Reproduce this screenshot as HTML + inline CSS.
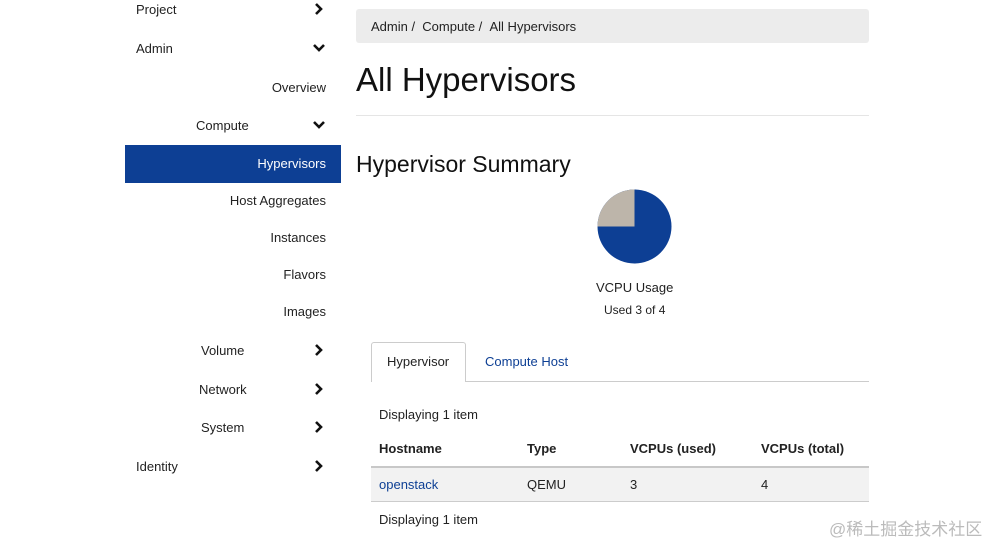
<!DOCTYPE html>
<html><head><meta charset="utf-8"><style>
*{margin:0;padding:0;box-sizing:border-box}
body{width:995px;height:543px;background:#fff;font-family:"Liberation Sans",Arial,sans-serif;color:#222;position:relative;overflow:hidden;font-size:13px}
.a{position:absolute;white-space:nowrap}
.r{position:absolute;right:669px;white-space:nowrap;font-size:13px}
</style></head><body>
<div class="a" style="left:136px;top:2px;font-size:13px">Project</div>
<div class="a" style="left:136px;top:41px;font-size:13px">Admin</div>
<div class="r" style="top:80px">Overview</div>
<div class="a" style="left:196px;top:118px">Compute</div>
<div class="a" style="left:125px;top:145px;width:216px;height:38px;background:#0d3f94"></div>
<div class="r" style="top:156px;color:#fff">Hypervisors</div>
<div class="r" style="top:193px">Host Aggregates</div>
<div class="r" style="top:230px">Instances</div>
<div class="r" style="top:267px">Flavors</div>
<div class="r" style="top:304px">Images</div>
<div class="a" style="left:201px;top:343px">Volume</div>
<div class="a" style="left:199px;top:382px">Network</div>
<div class="a" style="left:201px;top:420px">System</div>
<div class="a" style="left:136px;top:459px">Identity</div>
<svg class="a" style="left:310px;top:0" width="20" height="480" fill="none" stroke="#111" stroke-width="2.6">
<path d="M6 4l5 5-5 5"/><path d="M4 45l5 5 5-5"/><path d="M4 122l5 5 5-5"/>
<path d="M6 345l5 5-5 5"/><path d="M6 384l5 5-5 5"/><path d="M6 422l5 5-5 5"/><path d="M6 461l5 5-5 5"/>
</svg>
<div class="a" style="left:356px;top:9px;width:513px;height:34px;background:#ececec;border-radius:3px"></div>
<div class="a" style="left:371px;top:19px;font-size:13px">Admin&nbsp;/&nbsp;&nbsp;Compute&nbsp;/&nbsp;&nbsp;All Hypervisors</div>
<div class="a" style="left:356px;top:61px;font-size:33px;color:#111">All Hypervisors</div>
<div class="a" style="left:356px;top:115px;width:513px;height:1px;background:#e5e5e5"></div>
<div class="a" style="left:356px;top:151px;font-size:23px;color:#111">Hypervisor Summary</div>
<svg class="a" style="left:597px;top:189px" width="75" height="75"><circle cx="37.5" cy="37.5" r="37" fill="#0d3f94"/><path d="M37.5 37.5V0.5A37 37 0 0 0 0.5 37.5Z" fill="#bdb5aa"/></svg>
<div class="a" style="left:596px;top:280px;font-size:13px">VCPU Usage</div>
<div class="a" style="left:604px;top:303px;font-size:12px">Used 3 of 4</div>
<div class="a" style="left:371px;top:381px;width:498px;height:1px;background:#ccc"></div>
<div class="a" style="left:371px;top:342px;width:95px;height:40px;border:1px solid #ccc;border-bottom:none;border-radius:3px 3px 0 0;background:#fff"></div>
<div class="a" style="left:387px;top:354px">Hypervisor</div>
<div class="a" style="left:485px;top:354px;color:#0d3f94">Compute Host</div>
<div class="a" style="left:379px;top:407px">Displaying 1 item</div>
<div class="a" style="left:379px;top:441px;font-weight:bold">Hostname</div>
<div class="a" style="left:527px;top:441px;font-weight:bold">Type</div>
<div class="a" style="left:630px;top:441px;font-weight:bold">VCPUs (used)</div>
<div class="a" style="left:761px;top:441px;font-weight:bold">VCPUs (total)</div>
<div class="a" style="left:371px;top:466px;width:498px;height:36px;background:#f2f2f2;border-top:2px solid #c8c8c8;border-bottom:1px solid #ccc"></div>
<div class="a" style="left:379px;top:477px;color:#0d3f94">openstack</div>
<div class="a" style="left:527px;top:477px">QEMU</div>
<div class="a" style="left:630px;top:477px">3</div>
<div class="a" style="left:761px;top:477px">4</div>
<div class="a" style="left:379px;top:512px">Displaying 1 item</div>
<div class="a" style="left:829px;top:515px;font-size:17px;color:#bbb;font-family:'Liberation Sans','Noto Sans CJK SC',sans-serif">@稀土掘金技术社区</div>
</body></html>
